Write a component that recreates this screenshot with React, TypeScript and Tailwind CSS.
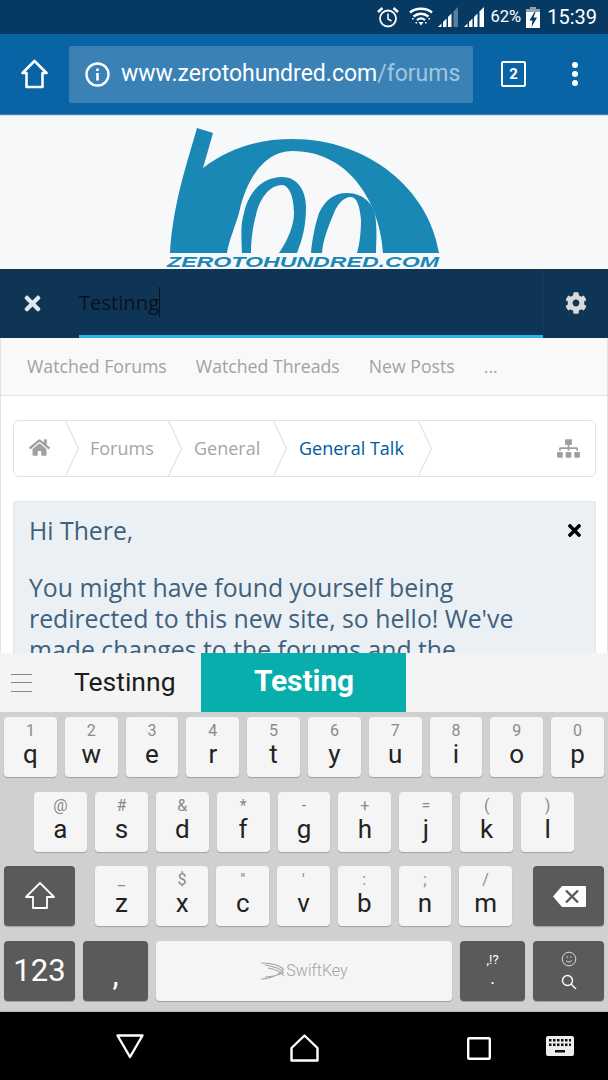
import React from "react";
import { FaHome, FaSitemap, FaCog, FaTimes } from "react-icons/fa";

const roboto = "font-['Roboto',sans-serif]";
const open = "font-['Open_Sans',sans-serif]";

function Alarm() {
  return (
    <svg width="24" height="24" viewBox="0 0 24 24" fill="none" stroke="white">
      <circle cx="12" cy="13.5" r="8" strokeWidth="1.8" />
      <path d="M12 8.5v5.5l3.5 2" strokeWidth="1.5" />
      <path d="M2 7 6.5 3M22 7 17.5 3" strokeWidth="2.4" />
    </svg>
  );
}
function Wifi() {
  return (
    <svg width="24" height="20" viewBox="0 0 24 20" fill="none" stroke="white">
      <path d="M1 5.5C7 0.5 17 0.5 23 5.5" strokeWidth="2.4" />
      <path d="M4.5 9.5C9 5.8 15 5.8 19.5 9.5" strokeWidth="2.4" />
      <path d="M8 13.2c2.5-2.2 5.5-2.2 8 0" strokeWidth="2.2" />
      <path d="M9.5 15h5L12 18.5z" fill="white" stroke="none" />
      <path d="M3 11h1.6v1.6H3zM19.5 11h1.6v1.6h-1.6zM6.5 15h1.6v1.6H6.5zM16 15h1.6v1.6H16z" fill="white" stroke="none" />
    </svg>
  );
}
function Signal({ dim }: { dim?: boolean }) {
  return (
    <svg width="20" height="20" viewBox="0 0 20 20">
      <path d="M0 20 3.5 16.5V20z" fill="white" />
      <path d="M5 20V15L8.5 11.5V20z" fill="white" />
      <path d="M10 20V10L13.5 6.5V20z" fill="white" />
      <path d="M15.5 20V4.5L20 0V20z" fill={dim ? "#5c7f99" : "white"} />
    </svg>
  );
}
function Battery() {
  return (
    <svg width="14" height="21" viewBox="0 0 14 21">
      <path d="M4 0h6v2H4z" fill="#8ea3b3" />
      <path d="M0 2h14v3H0z" fill="#8ea3b3" />
      <path d="M0 5h14v16H0z" fill="white" />
      <path d="M8.5 5 3.5 13.5H6.5L5.5 20 11 10.5H7.5L9.5 5z" fill="#063a63" />
    </svg>
  );
}

function StatusBar() {
  return (
    <div className={`h-[34px] bg-[#063a63] flex items-center justify-end pr-[11px] text-white ${roboto}`}>
      <Alarm />
      <div className="ml-[9px]"><Wifi /></div>
      <div className="ml-[5px]"><Signal dim /></div>
      <div className="ml-[6px]"><Signal /></div>
      <span className="ml-[7px] text-[16.5px]">62%</span>
      <div className="ml-[5px]"><Battery /></div>
      <span className="ml-[7px] text-[20px]">15:39</span>
    </div>
  );
}

function Toolbar() {
  return (
    <div className="h-[81px] bg-[#0864a5] flex items-center border-b border-[#3c86bb]">
      <svg className="ml-[21px]" width="27" height="30" viewBox="0 0 27 30" fill="none" stroke="white" strokeWidth="2.6" strokeLinejoin="round">
        <path d="M13.5 2 25.5 14H21.5V28H5.5V14H1.5z" />
      </svg>
      <div className={`ml-[21px] w-[404px] h-[57px] rounded-[2px] bg-[#3a82b6] flex items-center ${roboto}`}>
        <svg className="ml-[16px] shrink-0" width="25" height="25" viewBox="0 0 25 25" fill="none">
          <circle cx="12.5" cy="12.5" r="11" stroke="white" strokeWidth="2.4" />
          <path d="M11.2 11h2.6v7.5h-2.6zM11.2 6.5h2.6V9h-2.6z" fill="white" />
        </svg>
        <div className="ml-[11px] w-[340px] overflow-hidden">
          <span className="text-[23px] text-white whitespace-nowrap">
            www.zerotohundred.com<span className="text-[#a3c6de]">/forums/</span>
          </span>
        </div>
      </div>
      <div className={`ml-[28px] w-[25px] h-[26px] border-[2.5px] border-white rounded-[2px] flex items-center justify-center text-white text-[15px] font-bold ${roboto}`}>2</div>
      <div className="ml-[46px] flex flex-col gap-[3px]">
        <div className="w-[6px] h-[6px] rounded-full bg-white" />
        <div className="w-[6px] h-[6px] rounded-full bg-white" />
        <div className="w-[6px] h-[6px] rounded-full bg-white" />
      </div>
    </div>
  );
}

function Logo() {
  const outer =
    "M48 13 64 18 54 53C80 33 110 24 143 24 C220 24 280 75 290 138 L234 138 C232 95 205 36 143 36 C115 36 97 65 90 98 C86 112 80 125 78 138 L21 138 C24 90 36 55 48 13Z";
  const loop1 =
    "M93 138C92 118 92 108 95 98 C100 75 115 62 133 62 C150 62 157 78 157 92 C157 112 153 125 148 138 L130 138 C139 125 145 110 145 98 C145 82 140 70 133 70 C120 70 110 85 107 100 C103 115 102 128 102 138Z";
  const loop2 =
    "M162 138C163 125 166 110 170 98 C176 85 185 78 198 78 C215 78 227 90 227 108 C228 120 227 130 227 138 L208 138 C211 128 212 115 212 105 C211 92 208 82 202 82 C194 82 188 90 185 98 C179 112 174 125 173 138Z";
  return (
    <div className="h-[154px] bg-[#f6f8fa] border-t border-[#dcdee0] flex justify-center shrink-0">
      <svg width="310" height="153" viewBox="0 0 310 153">
        <g transform="translate(0,-1)">
          <path d={outer} fill="#1a88b5" />
          <path d={loop1} fill="#1a88b5" />
          <path d={loop2} fill="#1a88b5" />
          <text
            x="18"
            y="152"
            textLength="272"
            lengthAdjust="spacingAndGlyphs"
            fontFamily="'Liberation Sans',sans-serif"
            fontStyle="italic"
            fontWeight="700"
            fontSize="14"
            fill="#1a88b5"
          >
            ZEROTOHUNDRED.COM
          </text>
        </g>
      </svg>
    </div>
  );
}

function SearchBar() {
  return (
    <div className={`h-[69px] bg-[#0f3556] flex shrink-0 ${open}`}>
      <div className="w-[79px] flex items-center justify-center text-[#e4e6e8]">
        <FaTimes size={23} className="ml-[-15px]" />
      </div>
      <div className="w-[464px] border-b-[3px] border-[#2bb4e6] flex items-center">
        <span className="text-[20.2px] text-[#07121c] leading-[30px] border-r border-[#07121c] h-[30px]">Testinng</span>
      </div>
      <div className="flex-1 flex items-center justify-center border-l border-[#123a5d] text-[#d8dadc]">
        <FaCog size={22} className="ml-[-1px] mt-[-2px]" />
      </div>
    </div>
  );
}

function Tabs() {
  return (
    <div className={`h-[58px] bg-[#f9f9f9] border-b border-[#e3e3e3] flex items-center pl-[26px] text-[17.7px] text-[#a2a2a2] shrink-0 ${open}`}>
      <span>Watched Forums</span>
      <span className="ml-[29px]">Watched Threads</span>
      <span className="ml-[29px]">New Posts</span>
      <span className="ml-[29px]">...</span>
    </div>
  );
}

function Chevron() {
  return (
    <svg className="shrink-0" width="14" height="55" viewBox="0 0 14 55" fill="none" stroke="#e2e2e2" strokeWidth="1.2">
      <path d="M0.5 0 13.5 27.5 0.5 55" />
    </svg>
  );
}

function Breadcrumb() {
  return (
    <div className={`mt-[24px] ml-[12px] w-[583px] h-[57px] border border-[#e2e2e2] rounded-[6px] bg-white flex items-center text-[18px] text-[#a5a5a5] shrink-0 ${open}`}>
      <FaHome size={21} className="ml-[15px] text-[#a0a0a0] mt-[-3px]" />
      <div className="ml-[15px]"><Chevron /></div>
      <span className="ml-[11px] w-[78px]">Forums</span>
      <Chevron />
      <span className="ml-[12px] w-[79px]">General</span>
      <Chevron />
      <span className="ml-[12px] w-[119px] text-[#00599c]">General Talk</span>
      <Chevron />
      <FaSitemap size={23} className="ml-auto mr-[15px] text-[#a0a0a0]" />
    </div>
  );
}

function Notice() {
  return (
    <div className={`relative mt-[24px] ml-[12px] w-[583px] h-[300px] bg-[#ebf0f5] border border-[#dfe6ec] rounded-[2px] pl-[15px] pr-[60px] pt-[13px] text-[24.8px] leading-[31px] text-[#40607c] shrink-0 ${open}`}>
      <p>Hi There,</p>
      <p className="mt-[26px]">You might have found yourself being redirected to this new site, so hello! We've made changes to the forums and the</p>
      <FaTimes size={19} className="absolute right-[11px] top-[19px] text-black" />
    </div>
  );
}

function Suggestions() {
  return (
    <div className={`h-[59px] bg-[#f4f4f4] flex items-stretch shrink-0 ${roboto}`}>
      <div className="w-[74px] flex items-center shrink-0">
        <div className="ml-[11px] w-[21px] h-[18px] flex flex-col justify-between">
          <div className="h-px bg-[#8a8a8a]" />
          <div className="h-px bg-[#8a8a8a]" />
          <div className="h-px bg-[#8a8a8a]" />
        </div>
      </div>
      <div className="w-[127px] flex items-center text-[26.5px] text-[#1c1c1c] pb-[2px]">Testinng</div>
      <div className="w-[205px] bg-[#08aeac] flex items-center justify-center text-white text-[29.8px] font-bold pb-[2px] pl-[1px]">Testing</div>
    </div>
  );
}

function Key({ top, ch }: { top: string; ch: string }) {
  return (
    <div className={`flex-1 h-[60px] bg-[#f5f5f5] rounded-[4px] shadow-[0_1px_1px_#a0a0a0] flex flex-col items-center ${roboto}`}>
      <span className="h-[18px] mt-[5px] text-[16px] leading-[18px] text-[#8a8a8a]">{top}</span>
      <span className="text-[26px] leading-[29px] text-[#222]">{ch}</span>
    </div>
  );
}

function Dark({ w, children }: { w: string; children: React.ReactNode }) {
  return (
    <div className={`${w} h-[60px] shrink-0 bg-[#5a5a5a] rounded-[4px] shadow-[0_1px_1px_#a0a0a0] flex flex-col items-center justify-center text-white ${roboto}`}>
      {children}
    </div>
  );
}

const r1 = [["1", "q"], ["2", "w"], ["3", "e"], ["4", "r"], ["5", "t"], ["6", "y"], ["7", "u"], ["8", "i"], ["9", "o"], ["0", "p"]];
const r2 = [["@", "a"], ["#", "s"], ["&", "d"], ["*", "f"], ["-", "g"], ["+", "h"], ["=", "j"], ["(", "k"], [")", "l"]];
const r3 = [["_", "z"], ["$", "x"], ['"', "c"], ["'", "v"], [":", "b"], [";", "n"], ["/", "m"]];

function Keyboard() {
  return (
    <div className="h-[299px] bg-[#d0d0d0] pt-[5px] px-[4px] flex flex-col gap-[14.6px] shrink-0">
      <div className="flex gap-[8px]">
        {r1.map(([t, c]) => <Key key={c} top={t} ch={c} />)}
      </div>
      <div className="flex gap-[8px] px-[30px]">
        {r2.map(([t, c]) => <Key key={c} top={t} ch={c} />)}
      </div>
      <div className="flex">
        <Dark w="w-[71px]">
          <svg width="32" height="30" viewBox="0 0 32 30" fill="none" stroke="white" strokeWidth="1.8" strokeLinejoin="round">
            <path d="M16 2 30 16H23V27H9V16H2z" />
          </svg>
        </Dark>
        <div className="flex-1 flex gap-[8px] ml-[20px] mr-[21px]">
          {r3.map(([t, c]) => <Key key={c} top={t} ch={c} />)}
        </div>
        <Dark w="w-[71px]">
          <svg width="34" height="23" viewBox="0 0 34 23">
            <path d="M10 1h23a1 1 0 0 1 1 1v19a1 1 0 0 1-1 1H10L1 11.5z" fill="white" />
            <path d="M14 5.5 26 17.5M26 5.5 14 17.5" stroke="#5a5a5a" strokeWidth="2.4" />
          </svg>
        </Dark>
      </div>
      <div className="flex gap-[8px]">
        <Dark w="w-[71px]"><span className="text-[31px]">123</span></Dark>
        <Dark w="w-[65px]"><span className="text-[31px] mt-[8px]">,</span></Dark>
        <div className="flex-1 h-[60px] bg-[#f5f5f5] rounded-[4px] shadow-[0_1px_1px_#a0a0a0] flex items-center justify-center">
          <svg width="25" height="18" viewBox="0 0 25 18" fill="none" stroke="#a4a4a4" strokeWidth="1.1">
            <path d="M1 1C10 1 20 3 24 8M5 3C12 4 20 6 24 11M8 6C14 7 20 9 24 14M1 17C8 17 18 14 23 8M5 15C11 15 18 13 23 11" />
          </svg>
          <span className={`ml-[1px] text-[16px] text-[#a2a2a2] ${roboto} font-light`}>SwiftKey</span>
        </div>
        <Dark w="w-[65px]">
          <span className="text-[13px] leading-[14px]">,!?</span>
          <span className="text-[18px] leading-[20px] mt-[1px]">.</span>
        </Dark>
        <Dark w="w-[71px]">
          <svg width="16" height="16" viewBox="0 0 16 16" fill="none" stroke="#d8d8d8" strokeWidth="1">
            <circle cx="8" cy="8" r="6.8" />
            <path d="M5 9.5c1.5 2 4.5 2 6 0M5.5 6h1.5M9 6h1.5" />
          </svg>
          <svg className="mt-[7px]" width="16" height="16" viewBox="0 0 16 16" fill="none" stroke="white" strokeWidth="1.4">
            <circle cx="6.5" cy="6.5" r="5" />
            <path d="M10 10l5 5" />
          </svg>
        </Dark>
      </div>
    </div>
  );
}

function NavBar() {
  return (
    <div className="h-[69px] bg-black border-t border-[#b8b8b8] flex items-start shrink-0">
      <svg className="ml-[116px] mt-[22px]" width="28" height="25" viewBox="0 0 28 25" fill="none" stroke="white" strokeWidth="2.4" strokeLinejoin="round">
        <path d="M1.5 1.5h25L14 23z" />
      </svg>
      <svg className="ml-[146px] mt-[22px]" width="29" height="28" viewBox="0 0 29 28" fill="none" stroke="white" strokeWidth="2.4" strokeLinejoin="round">
        <path d="M14.5 1.5 27.5 14V26.5H1.5V14z" />
      </svg>
      <svg className="ml-[148px] mt-[25px]" width="24" height="23" viewBox="0 0 24 23" fill="none" stroke="white" strokeWidth="2.4">
        <rect x="1.2" y="1.2" width="21.6" height="20.6" rx="1" />
      </svg>
      <svg className="ml-[55px] mt-[24px]" width="28" height="20" viewBox="0 0 28 20">
        <rect width="28" height="20" rx="2" fill="#eee" />
        <path d="M3 3h2.5v2.5H3zM7 3h2.5v2.5H7zM11 3h2.5v2.5H11zM15 3h2.5v2.5H15zM19 3h2.5v2.5H19zM23 3h2v2.5h-2zM3 7.5h2.5V10H3zM7 7.5h2.5V10H7zM11 7.5h2.5V10H11zM15 7.5h2.5V10H15zM19 7.5h2.5V10H19zM23 7.5h2V10h-2zM9 14h10v2.5H9z" fill="#111" />
      </svg>
    </div>
  );
}

export default function App() {
  return (
    <div className="w-[608px] h-[1080px] overflow-hidden flex flex-col bg-white">
      <StatusBar />
      <Toolbar />
      <Logo />
      <SearchBar />
      <div className="h-[315px] overflow-hidden border-l border-[#e3e3e3] border-r flex flex-col shrink-0 bg-white">
        <Tabs />
        <Breadcrumb />
        <Notice />
      </div>
      <Suggestions />
      <Keyboard />
      <NavBar />
    </div>
  );
}
